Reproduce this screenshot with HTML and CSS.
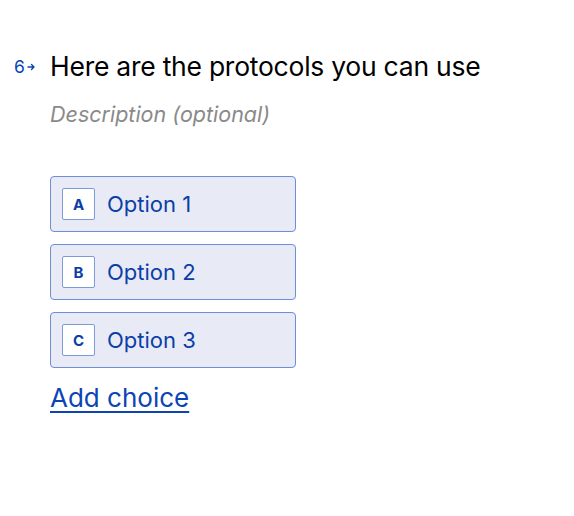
FILE: index.html
```html
<!DOCTYPE html>
<html>
<head>
<meta charset="utf-8">
<link rel="stylesheet" href="styles.css">
</head>
<body>
<div class="question">
  <div class="num"><span>6</span><svg class="arrow" width="9" height="8" viewBox="0 0 9 8"><path d="M1 4h6M4.5 1.5L7 4L4.5 6.5" fill="none" stroke="#0b45b5" stroke-width="1.4" stroke-linecap="round" stroke-linejoin="round"/></svg></div>
  <div class="content">
    <h1 class="title">Here are the protocols you can use</h1>
    <p class="desc">Description (optional)</p>
    <div class="choices">
      <div class="choice"><span class="key">A</span><span class="label">Option 1</span></div>
      <div class="choice"><span class="key">B</span><span class="label">Option 2</span></div>
      <div class="choice"><span class="key">C</span><span class="label">Option 3</span></div>
    </div>
    <a class="add" href="#">Add choice</a>
  </div>
</div>
</body>
</html>
```
FILE: styles.css
```css
html, body { margin: 0; padding: 0; background: #fff; }
body { font-family: Inter, "Noto Sans", sans-serif; }
.question { display: flex; padding: 49px 0 0 14px; }
.num { width: 36px; display: flex; align-items: center; height: 34px; color: #0b45b5; font-size: 17.5px; gap: 2px; }
.arrow { margin-top: 1px; }
.content { display: flex; flex-direction: column; align-items: flex-start; }
.title { margin: 0; font-weight: 400; font-size: 26.5px; line-height: 34px; color: #000; letter-spacing: -0.25px; }
.desc { margin: 18px 0 0; font-style: italic; font-size: 21.5px; line-height: 26px; color: #8a8a8a; }
.choices { margin-top: 49px; display: flex; flex-direction: column; gap: 12px; }
.choice { box-sizing: border-box; width: 246px; height: 56px; border: 1px solid #6e8fd8; border-radius: 4px; background: #e8ebf6; display: flex; align-items: center; padding-left: 11px; }
.key { box-sizing: border-box; width: 33px; height: 32px; border: 1px solid #7d9ad9; border-radius: 2px; background: #fff; display: flex; align-items: center; justify-content: center; font-size: 15px; font-weight: 700; color: #0b3ea6; }
.label { margin-left: 12px; font-size: 22px; color: #0b3ea6; }
.add { margin-top: 13px; font-size: 26px; line-height: 34px; color: #0b45b5; text-decoration: underline; text-decoration-thickness: 2px; text-underline-offset: 4px; }
```
